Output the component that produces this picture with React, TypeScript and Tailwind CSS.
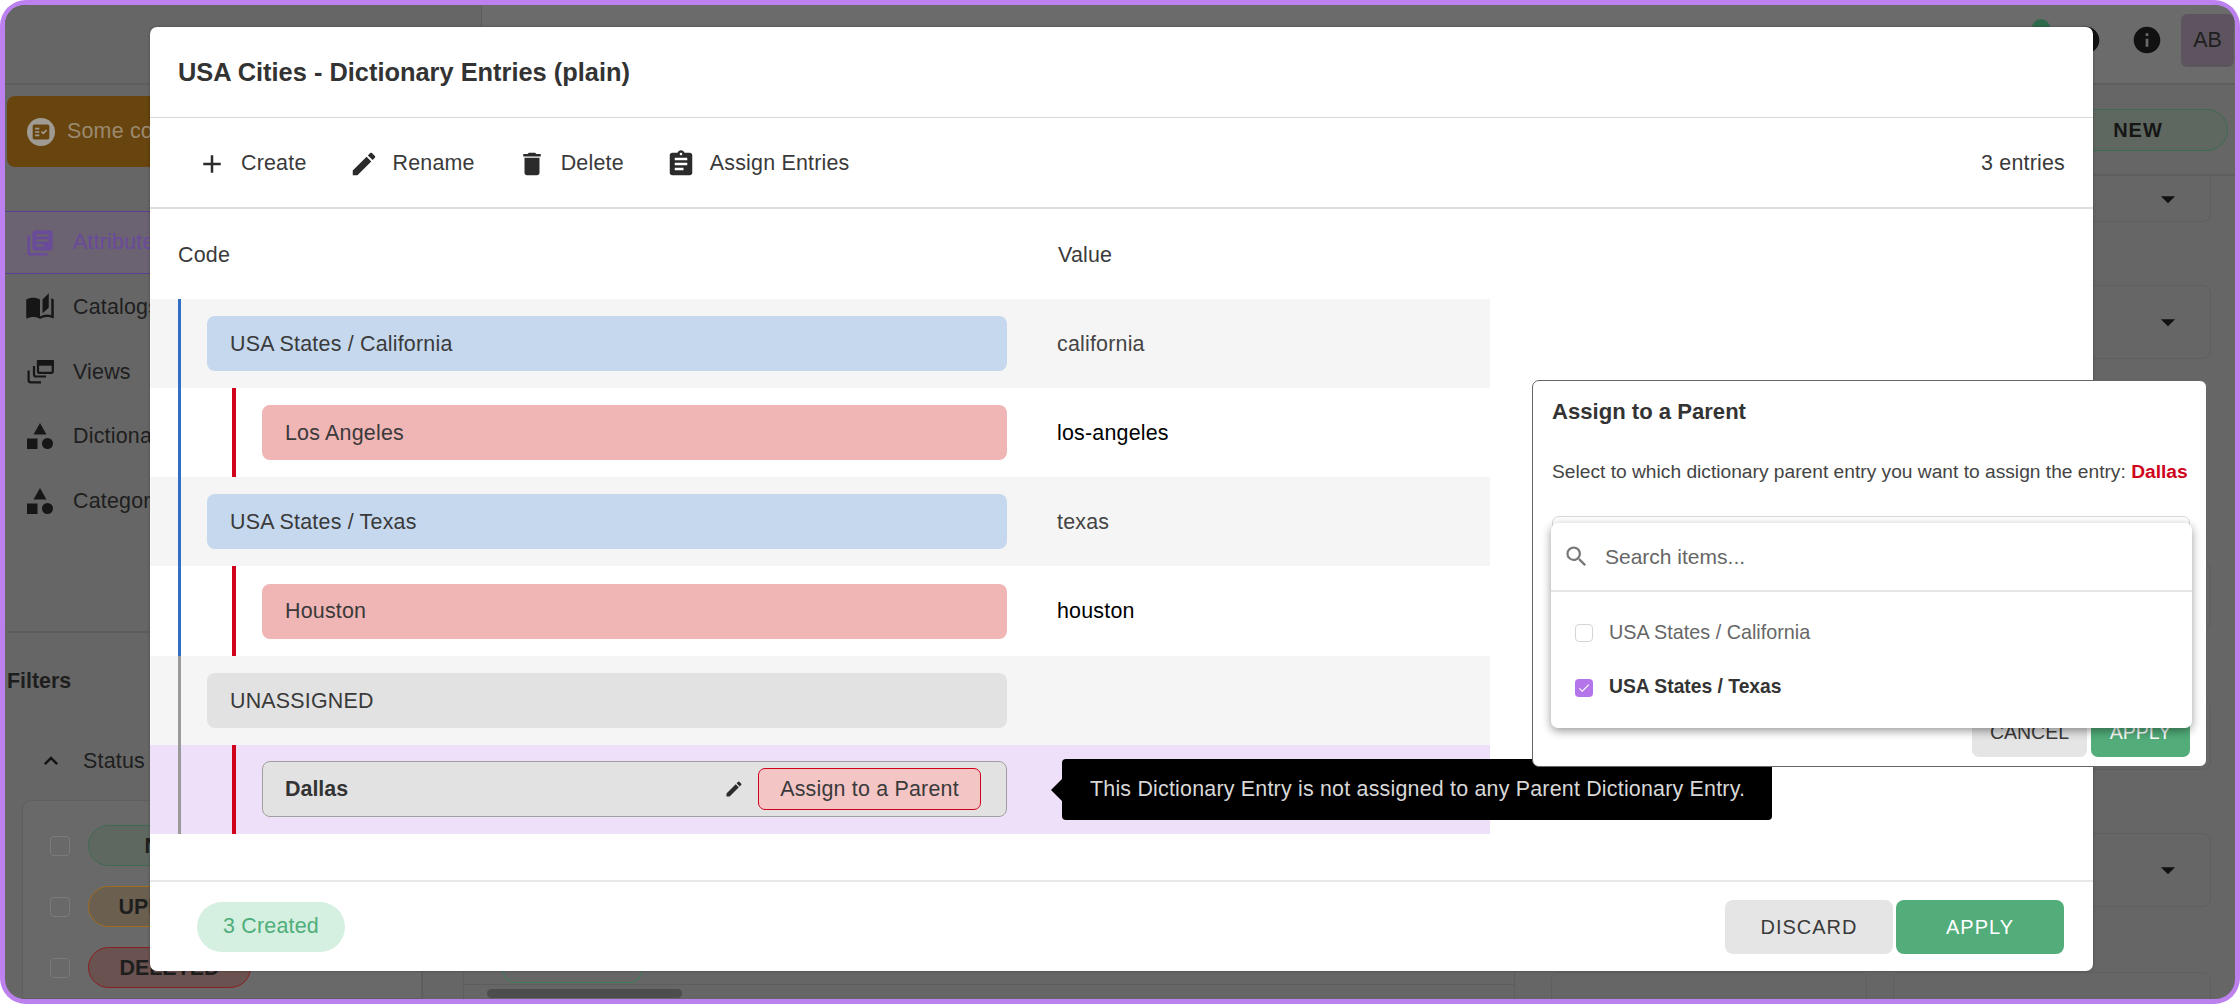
import React from "react";
import {
  MdAdd, MdEdit, MdDelete, MdAssignment, MdSearch, MdLibraryBooks, MdAutoStories,
  MdInfo, MdExpandLess, MdArrowDropDown, MdCheck, MdHelp, MdFactCheck,
} from "react-icons/md";

const ShapesIcon = () => (
  <svg viewBox="0 0 26 26" className="h-[26px] w-[26px] fill-[#161616]">
    <polygon points="13,0 19.5,11.5 6.5,11.5" />
    <rect x="0" y="15.5" width="10.5" height="10.5" />
    <circle cx="20.5" cy="20.5" r="5.5" />
  </svg>
);

const ViewsIcon = () => (
  <svg viewBox="0 0 27 24" className="h-[24px] w-[27px] fill-none stroke-[#161616] stroke-[2.2]">
    <rect x="11" y="1.2" width="14.8" height="11.6" rx="1.6" />
    <rect x="11" y="1.2" width="14.8" height="3.4" className="fill-[#161616]" />
    <path d="M7 6v8.5a2 2 0 0 0 2 2h10" />
    <path d="M1.6 10.5v9.5a2.4 2.4 0 0 0 2.4 2.4h10" />
  </svg>
);

const NavItem = ({ icon, label }: { icon: React.ReactNode; label: string }) => (
  <div className="flex h-[64.5px] items-center gap-[18px] pl-[20px] text-[21.43px] tracking-[0.2px] text-[#1e1e1e]">
    <span className="flex w-[30px] justify-center">{icon}</span>
    <span>{label}</span>
  </div>
);

const FilterRow = ({ label, cls }: { label: string; cls: string }) => (
  <div className="flex h-[61px] items-center gap-[18px] pl-[27px]">
    <span className="h-[20px] w-[20px] rounded-[4px] border border-[#7b7b7b]" />
    <span className={`flex h-[41px] w-[163px] items-center justify-center rounded-full border-[1.5px] text-[21.43px] font-bold text-[#1e1e1e] ${cls}`}>{label}</span>
  </div>
);

const SideCard = ({ cls, caret }: { cls: string; caret?: boolean }) => (
  <div className={`flex items-center justify-end rounded-[8px] border border-[#5f5f5f] pr-[25px] ${cls}`}>
    {caret && <MdArrowDropDown className="text-[34px] text-[#111]" />}
  </div>
);

const Parent = ({ label, value, bar, pill }: { label: string; value?: string; bar: string; pill: string }) => (
  <div className="flex h-[89.17px] bg-[#f5f5f5]">
    <div className={`ml-[28px] flex w-[829px] items-center border-l-[3px] pl-[26px] ${bar}`}>
      <div className={`flex h-[55px] flex-1 items-center rounded-[8px] pl-[23px] pt-[1px] text-[21.43px] tracking-[0.2px] text-[#3a3a3a] ${pill}`}>{label}</div>
    </div>
    <div className="ml-[50px] flex items-center pt-[1px] text-[21.43px] tracking-[0.2px] text-[#444]">{value}</div>
  </div>
);

const Child = ({ label, value, bar, bg, children }: { label: string; value?: string; bar: string; bg: string; children?: React.ReactNode }) => (
  <div className={`flex h-[89.17px] ${bg}`}>
    <div className={`ml-[28px] flex w-[829px] border-l-[3px] pl-[51px] ${bar}`}>
      <div className="flex flex-1 items-center border-l-[4px] border-[#d0021b] pl-[26px]">{children ?? (
        <div className="flex h-[55px] flex-1 items-center rounded-[8px] bg-[#f0b5b5] pl-[23px] pt-[1px] text-[21.43px] tracking-[0.2px] text-[#3a3a3a]">{label}</div>
      )}</div>
    </div>
    <div className="ml-[50px] flex items-center pt-[1px] text-[21.43px] tracking-[0.2px] text-black">{value}</div>
  </div>
);

const Tool = ({ icon, label }: { icon: React.ReactNode; label: string }) => (
  <div className="flex items-center gap-[14px] text-[21.43px] tracking-[0.2px] text-[#3a3a3a]">
    <span className="flex w-[30px] justify-center text-[#2b2b2b]">{icon}</span>
    <span>{label}</span>
  </div>
);

export default function App() {
  return (
    <div className="relative h-[1004px] w-[2240px] overflow-hidden bg-white font-['Liberation_Sans',Arial,sans-serif]">
      {/* Frame with the dimmed page behind the dialog */}
      <div className="h-full w-full rounded-[26px] bg-[#bd80ef] p-[5px]">
        <div className="flex h-full flex-col overflow-hidden rounded-[20px] bg-[#666]">
          <div className="flex h-[80px] shrink-0 items-center border-b-2 border-[#5e5e5e] bg-[#6b6b6b] pb-[8px] pr-[1px]">
            <div className="mb-[-8px] mr-auto h-[78px] w-[477px] border-r border-[#5d5d5d] bg-[#666]" />
            <span className="mr-[20px] mt-[14px] h-[18px] w-[18px] self-start rounded-full bg-[#2e6b4c]" />
            <MdHelp className="mr-[29px] text-[32px] text-[#111]" />
            <MdInfo className="mr-[18px] text-[32px] text-[#111]" />
            <div className="flex h-[53px] w-[53px] items-center justify-center rounded-[6px] bg-[#5e5460] text-[21.43px] text-[#1e1e1e]">AB</div>
          </div>
          <div className="flex min-h-0 flex-1">
            <div className="w-[418px] shrink-0 border-r border-[#5d5d5d] pt-[11px]">
              <div className="ml-[2px] flex h-[71px] items-center gap-[12px] rounded-[8px] bg-[#68440e] pl-[20px] text-[21.43px] tracking-[0.2px] text-[#9a8a6f]">
                <span className="flex h-[28px] w-[28px] items-center justify-center rounded-full bg-[#a09c94]">
                  <MdFactCheck className="text-[20px] text-[#68440e]" />
                </span>
                <span>Some content needs review</span>
              </div>
              <div className="mt-[44px]">
                <div className="mb-[1px] flex h-[63px] items-center gap-[18px] border-y border-[#5b3f90] bg-[#6b6272] pl-[20px] text-[21.43px] tracking-[0.2px] text-[#6a4a9a]">
                  <span className="flex w-[30px] justify-center"><MdLibraryBooks className="text-[32px]" /></span>
                  <span>Attributes</span>
                </div>
                <NavItem icon={<MdAutoStories className="text-[32px] text-[#161616]" />} label="Catalogs" />
                <NavItem icon={<ViewsIcon />} label="Views" />
                <NavItem icon={<ShapesIcon />} label="Dictionaries" />
                <NavItem icon={<ShapesIcon />} label="Categories" />
              </div>
              <div className="ml-[2px] mt-[98px] border-t-2 border-[#5d5d5d]" />
              <div className="mt-[32px] pl-[2px] text-[21.43px] font-bold text-[#1e1e1e]">Filters</div>
              <div className="mt-[48px] flex items-center gap-[18px] pl-[32px] text-[21.43px] tracking-[0.2px] text-[#1e1e1e]">
                <MdExpandLess className="text-[28px] text-[#111]" />
                <span>Status</span>
              </div>
              <div className="ml-[17px] mt-[23px] rounded-t-[10px] border border-[#5f5f5f] bg-[#696969] pt-[14px]">
                <FilterRow label="NEW" cls="border-[#3d6b52] bg-[#5f6860]" />
                <FilterRow label="UPDATED" cls="border-[#a06c20] bg-[#6b6050]" />
                <FilterRow label="DELETED" cls="border-[#8a2020] bg-[#6a5250]" />
              </div>
            </div>
            <div className="ml-[40px] flex min-w-0 flex-1 flex-col border-l border-[#5d5d5d]">
              <div className="flex h-[91px] shrink-0 items-center justify-end border-b-2 border-[#5d5d5d] pr-[7px]">
                <div className="flex h-[42px] w-[180px] items-center justify-center rounded-full border-[1.5px] border-[#3d6b52] bg-[#5f6860] text-[20px] font-bold tracking-[1px] text-[#161616]">NEW</div>
              </div>
              <div className="flex min-h-0 flex-1">
                <div className="flex w-[1051px] shrink-0 flex-col justify-end border-r border-[#5d5d5d]">
                  <div className="ml-[39px] h-[12px] w-[139px] rounded-b-[20px] border-x border-b border-[#3f7a58]" />
                  <div className="mt-[1px] border-t border-[#5d5d5d] pb-[1px] pl-[23px] pt-[4px]">
                    <div className="h-[9px] w-[195px] rounded-full bg-[#4d4d4d]" />
                  </div>
                </div>
                <div className="flex-1 pl-[36px] pr-[25px]">
                  <SideCard cls="h-[46px] rounded-t-none border-t-0" caret />
                  <SideCard cls="mt-[63px] h-[74px]" caret />
                  <SideCard cls="mt-[204px] h-[67px]" />
                  <SideCard cls="mt-[70px] h-[70px]" />
                  <SideCard cls="mt-[63px] h-[74px]" caret />
                  <div className="mt-[65px] grid grid-cols-[316px_318px] gap-[26px]">
                    <SideCard cls="h-[40px]" />
                    <SideCard cls="h-[40px]" />
                  </div>
                </div>
              </div>
            </div>
          </div>
        </div>
      </div>

      {/* Dialog */}
      <div className="absolute left-[150px] top-[27px] flex h-[944px] w-[1943px] flex-col overflow-hidden rounded-[7px] bg-white shadow-[0_0_3px_rgba(0,0,0,0.3)]">
        <div className="flex h-[91px] shrink-0 items-center border-b border-[#d8d8d8] pl-[28px] text-[25.4px] font-bold text-[#333]">
          USA Cities - Dictionary Entries (plain)
        </div>
        <div className="flex h-[91px] shrink-0 items-center gap-[42px] border-b-2 border-[#dedede] pl-[47px] pr-[28px] pt-[2px]">
          <Tool icon={<MdAdd className="text-[32px]" />} label="Create" />
          <Tool icon={<MdEdit className="text-[34px]" />} label="Rename" />
          <Tool icon={<MdDelete className="text-[34px]" />} label="Delete" />
          <Tool icon={<MdAssignment className="text-[34px]" />} label="Assign Entries" />
          <div className="ml-auto text-[21.43px] tracking-[0.2px] text-[#3a3a3a]">3 entries</div>
        </div>
        <div className="flex h-[90px] shrink-0 items-center pl-[28px] pt-[2px] text-[21.43px] tracking-[0.2px] text-[#3a3a3a]">
          <div className="w-[880px]">Code</div>
          <div>Value</div>
        </div>
        <div className="w-[1340px]">
          <Parent label="USA States / California" value="california" bar="border-[#2f6fc4]" pill="bg-[#c5d8ee]" />
          <Child label="Los Angeles" value="los-angeles" bar="border-[#2f6fc4]" bg="bg-white" />
          <Parent label="USA States / Texas" value="texas" bar="border-[#2f6fc4]" pill="bg-[#c5d8ee]" />
          <Child label="Houston" value="houston" bar="border-[#2f6fc4]" bg="bg-white" />
          <Parent label="UNASSIGNED" bar="border-[#9a9a9a]" pill="bg-[#e2e2e2]" />
          <Child label="Dallas" bar="border-[#9a9a9a]" bg="bg-[#eee0f9]">
            <div className="flex h-[56px] flex-1 items-center rounded-[8px] border border-[#a0a0a0] bg-[#e2e2e2] pl-[22px] pr-[25px] text-[21.43px] font-bold text-[#333]">
              <span>Dallas</span>
              <MdEdit className="ml-auto mr-[14px] text-[20px] text-[#2b2b2b]" />
              <div className="flex h-[42px] w-[223px] items-center justify-center rounded-[7px] border border-[#d0021b] bg-[#f3c5c5] font-normal tracking-[0.2px] text-[#3a3a3a]">Assign to a Parent</div>
            </div>
          </Child>
        </div>
        <div className="min-h-0 flex-1" />
        <div className="flex h-[91px] shrink-0 items-center justify-between border-t-2 border-[#e8e8e8] pl-[47px] pr-[29px]">
          <div className="flex h-[50px] w-[148px] items-center justify-center rounded-full bg-[#d5efe1] text-[21.43px] tracking-[0.2px] text-[#4fae7a]">3 Created</div>
          <div className="flex gap-[3px] text-[20px] tracking-[1px]">
            <div className="flex h-[54px] w-[168px] items-center justify-center rounded-[8px] bg-[#e5e5e5] text-[#3a3a3a]">DISCARD</div>
            <div className="flex h-[54px] w-[168px] items-center justify-center rounded-[8px] bg-[#52ad7a] text-white">APPLY</div>
          </div>
        </div>
      </div>

      {/* Tooltip */}
      <div className="absolute left-[1062px] top-[759px] flex h-[61px] w-[710px] items-center rounded-[4px] bg-black pl-[28px] text-[21.43px] tracking-[0.2px] text-[#d8d8d8]">
        <span className="absolute left-[-11px] top-[20px] h-0 w-0 border-y-[11px] border-r-[11px] border-y-transparent border-r-black" />
        This Dictionary Entry is not assigned to any Parent Dictionary Entry.
      </div>

      {/* Assign popover */}
      <div className="absolute left-[1532px] top-[380px] flex h-[387px] w-[675px] flex-col rounded-[7px] border border-[#666] bg-white pb-[9px] pl-[19px] pr-[16px]">
        <div className="pt-[14px] text-[22.1px] font-bold text-[#333]">Assign to a Parent</div>
        <div className="mt-[30px] whitespace-nowrap text-[19.2px] text-[#444]">
          Select to which dictionary parent entry you want to assign the entry: <span className="font-bold text-[#d0021b]">Dallas</span>
        </div>
        <div className="mt-[29px] h-[58px] rounded-[7px] border border-[#d8d8d8]" />
        <div className="mt-auto flex justify-end gap-[4px] pt-[1px] text-[19.5px]">
          <div className="flex h-[48px] w-[115px] items-center justify-center rounded-[7px] bg-[#e5e5e5] text-[#3a3a3a]">CANCEL</div>
          <div className="flex h-[48px] w-[99px] items-center justify-center rounded-[7px] bg-[#52ad7a] text-white">APPLY</div>
        </div>
      </div>

      {/* Dropdown */}
      <div className="absolute left-[1551px] top-[523px] w-[641px] rounded-[7px] bg-white shadow-[0_3px_10px_rgba(0,0,0,0.4)]">
        <div className="flex h-[69px] items-center gap-[15px] border-b-2 border-[#e6e6e6] pl-[12px] text-[21px] text-[#666]">
          <MdSearch className="text-[27px] text-[#777]" />
          <span>Search items...</span>
        </div>
        <div className="py-[13px]">
          <div className="flex h-[55px] items-center gap-[16px] pl-[24px] text-[19.8px] text-[#666]">
            <span className="h-[18px] w-[18px] rounded-[4px] border border-[#d6d6d6]" />
            <span>USA States / California</span>
          </div>
          <div className="flex h-[55px] items-center gap-[16px] pl-[24px] text-[19.3px] font-bold text-[#333]">
            <span className="flex h-[18px] w-[18px] items-center justify-center rounded-[4px] bg-[#b474ea]">
              <MdCheck className="text-[14px] text-white" />
            </span>
            <span>USA States / Texas</span>
          </div>
        </div>
      </div>
    </div>
  );
}
